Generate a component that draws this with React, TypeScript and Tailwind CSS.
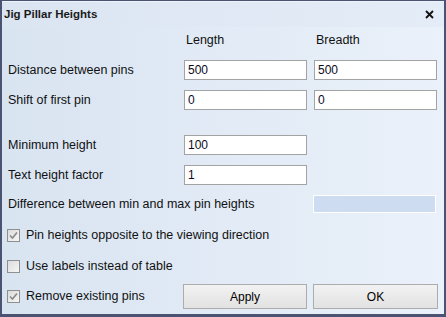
const font = { fontFamily: '"Liberation Sans", Arial, sans-serif' };

function TextBox({ value }: { value: string }) {
  return (
    <div className="w-[123px] h-[20px] bg-white border border-[#a3a3a3] pl-[3px] flex items-center text-[12px] text-[#0b0b1e]">
      {value}
    </div>
  );
}

function CheckBox({ checked }: { checked: boolean }) {
  return (
    <div className="w-[13px] h-[13px] border border-[#8e8f8f] bg-gradient-to-br from-[#dcdcdc] to-[#f6f6f6] flex items-center justify-center">
      {checked && (
        <svg width="9" height="9" viewBox="0 0 9 9">
          <path d="M1 4.5 L3.5 7 L8 1.5" fill="none" stroke="#8a8a8a" strokeWidth="1.6" />
        </svg>
      )}
    </div>
  );
}

function Button({ label, w }: { label: string; w: string }) {
  return (
    <button className={`${w} h-[25px] border border-[#acacac] bg-gradient-to-b from-[#f2f2f2] to-[#e2e2e2] text-[12px] text-black flex items-center justify-center`}>
      {label}
    </button>
  );
}

export default function App() {
  return (
    <div
      className="w-[446px] h-[317px] border-l-2 border-r-2 border-t border-b-[3px] border-[#4a5371] flex flex-col text-[#111] overflow-hidden"
      style={font}
    >
      {/* title bar */}
      <div className="h-[26px] shrink-0 flex items-center justify-between pl-[2px] pr-[10px] bg-gradient-to-r from-[#dbe5f1] to-[#e4ecf7] border-t border-[#eef3fa]">
        <span className="text-[11.5px] font-bold text-[#1a1a1a]">Jig Pillar Heights</span>
        <svg width="9" height="9" viewBox="0 0 9 9">
          <path d="M1 1 L8 8 M8 1 L1 8" stroke="#111" strokeWidth="1.8" />
        </svg>
      </div>

      {/* body */}
      <div className="flex-1 bg-gradient-to-r from-[#d9e4f1] to-[#eaf1fa] pl-[6px] text-[12.5px]">
        <div className="grid grid-cols-[169px_123px_123px] gap-x-[7px]">
          <div className="h-[20px] mt-[3px]" />
          <div className="h-[20px] mt-[3px] pl-[2px] flex items-center">Length</div>
          <div className="h-[20px] mt-[3px] pl-[2px] flex items-center">Breadth</div>

          <div className="h-[20px] mt-[10px] flex items-center">Distance between pins</div>
          <div className="mt-[10px]"><TextBox value="500" /></div>
          <div className="mt-[10px]"><TextBox value="500" /></div>

          <div className="h-[20px] mt-[10px] flex items-center">Shift of first pin</div>
          <div className="mt-[10px]"><TextBox value="0" /></div>
          <div className="mt-[10px]"><TextBox value="0" /></div>

          <div className="h-[20px] mt-[25px] flex items-center">Minimum height</div>
          <div className="mt-[25px]"><TextBox value="100" /></div>
          <div className="mt-[25px]" />

          <div className="h-[20px] mt-[10px] flex items-center">Text height factor</div>
          <div className="mt-[10px]"><TextBox value="1" /></div>
          <div className="mt-[10px]" />
        </div>

        <div className="h-[18px] mt-[10px] flex items-center justify-between pr-[8px]">
          <span>Difference between min and max pin heights</span>
          <div className="w-[123px] h-[18px] bg-[#cddcf0] border border-white" />
        </div>

        <div className="h-[20px] mt-[12px] flex items-center gap-[6px] -ml-[1px]">
          <CheckBox checked />
          <span>Pin heights opposite to the viewing direction</span>
        </div>

        <div className="h-[20px] mt-[11px] flex items-center gap-[6px] -ml-[1px]">
          <CheckBox checked={false} />
          <span>Use labels instead of table</span>
        </div>

        <div className="h-[25px] mt-[8px] flex items-center">
          <div className="w-[176px] flex items-center gap-[6px] -ml-[1px]">
            <CheckBox checked />
            <span>Remove existing pins</span>
          </div>
          <div className="flex gap-[6px]">
            <Button label="Apply" w="w-[124px]" />
            <Button label="OK" w="w-[125px]" />
          </div>
        </div>
      </div>
    </div>
  );
}
